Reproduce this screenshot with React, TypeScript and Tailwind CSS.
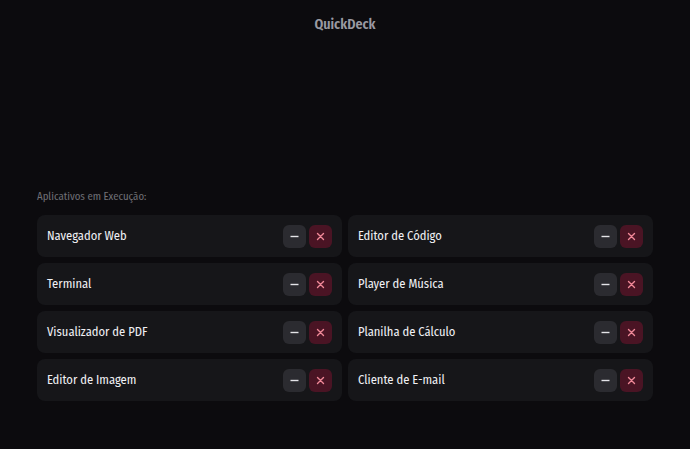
const apps = [
  'Navegador Web',
  'Editor de Código',
  'Terminal',
  'Player de Música',
  'Visualizador de PDF',
  'Planilha de Cálculo',
  'Editor de Imagem',
  'Cliente de E-mail',
];

function AppCard({ name }: { name: string }) {
  return (
    <div className="flex h-[42px] items-center justify-between rounded-lg bg-[#161619] pl-[10px] pr-[10px]">
      <span className="text-[12.5px] font-normal text-[#f0f0f4]">{name}</span>
      <div className="flex gap-[3px]">
        <button className="flex h-[23px] w-[23px] items-center justify-center rounded-md bg-[#2b2b30]">
          <svg width="9" height="9" viewBox="0 0 9 9" stroke="#e4e4e8" strokeWidth="1.4">
            <path d="M0.5 4.5h8" />
          </svg>
        </button>
        <button className="flex h-[23px] w-[23px] items-center justify-center rounded-md bg-[#4a1424]">
          <svg width="9" height="9" viewBox="0 0 9 9" stroke="#f08898" strokeWidth="1.4" strokeLinecap="round">
            <path d="M1.5 1.5l6 6M7.5 1.5l-6 6" />
          </svg>
        </button>
      </div>
    </div>
  );
}

export default function App() {
  return (
    <div
      className="h-[449px] w-full bg-[#0c0b0e]"
      style={{ fontFamily: '"Fira Sans Condensed", "Fira Sans", "Open Sans", sans-serif' }}
    >
      <div className="pt-[14px] text-center text-[14px] font-semibold text-[#9a9aa2]">QuickDeck</div>
      <div className="mx-auto mt-[154px] w-[616px]">
        <div className="mb-[10px] text-[10.75px] leading-[16px] text-[#707076]">Aplicativos em Execução:</div>
        <div className="grid grid-cols-2 gap-x-[6px] gap-y-[6px]">
          {apps.map((a) => (
            <AppCard key={a} name={a} />
          ))}
        </div>
      </div>
    </div>
  );
}
